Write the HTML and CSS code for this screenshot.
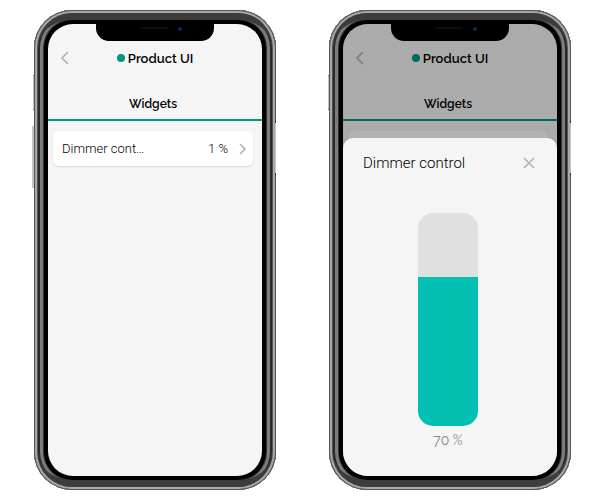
FILE: index.html
```html
<!DOCTYPE html>
<html lang="en">
<head>
    <meta charset="UTF-8">
    <meta name="viewport" content="width=device-width, initial-scale=1">
    <title>Product UI</title>
    <link rel="stylesheet" href="styles.css">
</head>
<body>
    <main class="phones">
        <section class="phone">
            <span class="side-key mute"></span>
            <span class="side-key volume"></span>
            <span class="side-key power"></span>
            <div class="screen">
                <div class="notch"><span class="speaker"></span><span class="camera"></span></div>
                <header class="app-header">
                    <button class="icon-button" aria-label="Back">
                        <svg width="8" height="14" viewBox="0 0 8 14"><path d="M7 1L1 7l6 6"/></svg>
                    </button>
                    <h1><span class="status"></span>Product UI</h1>
                </header>
                <nav class="tabs"><a href="#">Widgets</a></nav>
                <div class="widgets">
                    <a class="widget" href="#">
                        <span class="widget-name">Dimmer cont…</span>
                        <span class="widget-value">1 %</span>
                        <svg width="8" height="12" viewBox="0 0 8 12"><path d="M1 1l5 5-5 5"/></svg>
                    </a>
                </div>
            </div>
        </section>

        <section class="phone">
            <span class="side-key mute"></span>
            <span class="side-key power"></span>
            <div class="screen">
                <div class="notch"><span class="speaker"></span><span class="camera"></span></div>
                <header class="app-header">
                    <button class="icon-button" aria-label="Back">
                        <svg width="8" height="14" viewBox="0 0 8 14"><path d="M7 1L1 7l6 6"/></svg>
                    </button>
                    <h1><span class="status"></span>Product UI</h1>
                </header>
                <nav class="tabs"><a href="#">Widgets</a></nav>
                <div class="widgets">
                    <div class="widget"></div>
                </div>
                <div class="overlay">
                    <div class="sheet" role="dialog" aria-labelledby="dimmer-title">
                        <div class="sheet-header">
                            <h2 id="dimmer-title">Dimmer control</h2>
                            <button class="icon-button" aria-label="Close">
                                <svg width="12" height="12" viewBox="0 0 12 12"><path d="M1 1l10 10M11 1L1 11"/></svg>
                            </button>
                        </div>
                        <div class="dimmer">
                            <input id="dimmer" class="dimmer-slider" type="range" min="0" max="100" value="70" style="--level: 70%">
                            <label for="dimmer">70 %</label>
                        </div>
                    </div>
                </div>
            </div>
        </section>
    </main>
</body>
</html>
```
FILE: styles.css
```css
* {
    box-sizing: border-box;
}

body {
    margin: 0;
    background: #fff;
    font-family: Raleway, Lato, sans-serif;
    font-size: 12px;
    color: #000;
}

h1, h2 {
    margin: 0;
}

a {
    color: inherit;
    text-decoration: none;
}

svg {
    display: block;
    fill: none;
    stroke: #b4b4b4;
    stroke-width: 1.7;
}

.phones {
    display: grid;
    grid-template-columns: 1fr 1fr;
    gap: 53px;
    height: 100vh;
    padding: 10px 29px 10px 34px;
}

/* Metal frame, drawn as rings around the black bezel */
.phone {
    position: relative;
    padding: 14px;
    border-radius: 38px;
    background: #000;
    box-shadow:
        inset 0 0 0 1px #555,
        inset 0 0 0 3px #a8a8a8,
        inset 0 0 0 4px #555,
        inset 0 0 0 6px #2a2a2a,
        inset 0 0 0 9px #7c7c7c,
        inset 0 0 0 10px #333;
}

/* The frame is darker along the top and bottom edges */
.phone::before {
    content: "";
    position: absolute;
    inset: 3px 4px;
    border: solid #3c3c3c;
    border-width: 7px 0;
    border-radius: 34px;
}

.side-key {
    position: absolute;
    background: #c4c4c4;
}

.mute {
    top: 65px;
    left: -1px;
    width: 1px;
    height: 35px;
    border: solid #777;
    border-width: 1px 0;
}

.volume {
    top: 116px;
    left: -2px;
    width: 2px;
    height: 62px;
}

.power {
    top: 111px;
    right: 0;
    width: 1px;
    height: 54px;
    border: solid #222;
    border-width: 2px 0;
}

.screen {
    position: relative;
    height: 100%;
    overflow: hidden;
    border-radius: 25px;
    background: #f5f5f5;
}

.notch {
    position: absolute;
    z-index: 2;
    top: 0;
    left: 50%;
    display: flex;
    align-items: flex-start;
    justify-content: center;
    gap: 10px;
    width: 118px;
    height: 17px;
    padding-top: 3px;
    border-radius: 0 0 13px 13px;
    background: #000;
    transform: translateX(-50%);
}

.speaker {
    width: 28px;
    height: 2px;
    margin-left: 12px;
    border-radius: 1px;
    background: #0e0e0e;
}

.camera {
    width: 4px;
    height: 4px;
    border-radius: 50%;
    background: #0b2b50;
}

.app-header {
    display: grid;
    grid-template-columns: 24px 1fr 24px;
    align-items: center;
    height: 68px;
    padding: 0 5px;
}

.app-header h1 {
    display: flex;
    align-items: center;
    justify-content: center;
    gap: 3px;
    font-size: 13px;
    font-weight: 600;
}

.status {
    width: 8px;
    height: 8px;
    border-radius: 50%;
    background: #009688;
}

.icon-button {
    display: grid;
    place-items: center;
    width: 24px;
    height: 24px;
    padding: 0;
    border: 0;
    background: none;
}

.tabs {
    display: flex;
    height: 29px;
    border-bottom: 2px solid #009688;
}

.tabs a {
    flex: 1;
    padding-right: 4px;
    line-height: 24px;
    font-weight: 600;
    text-align: center;
}

.widgets {
    padding: 10px 9px 10px 5px;
}

.widget {
    display: flex;
    align-items: center;
    height: 35px;
    padding: 0 6px 0 9px;
    border-radius: 6px;
    background: #fff;
    box-shadow: 0 1px 2px rgba(0, 0, 0, 0.12);
    font-family: Roboto, sans-serif;
    font-size: 13px;
    font-weight: 300;
}

.widget-name {
    white-space: nowrap;
}

.widget-value {
    margin-left: auto;
    margin-right: 11px;
}

.overlay {
    position: absolute;
    z-index: 1;
    inset: 0;
    display: flex;
    padding-top: 114px;
    background: rgba(0, 0, 0, 0.3);
}

.sheet {
    flex: 1;
    border-radius: 10px 10px 0 0;
    background: #f5f5f5;
}

.sheet-header {
    display: flex;
    align-items: center;
    justify-content: space-between;
    height: 50px;
    padding: 0 16px 0 20px;
}

.sheet-header h2 {
    font-family: Roboto, sans-serif;
    font-size: 15px;
    font-weight: 300;
}

.dimmer {
    display: flex;
    flex-direction: column;
    align-items: center;
    gap: 6px;
    padding: 25px 4px 0 0;
}

.dimmer label {
    font-size: 14px;
    color: #888;
}

.dimmer-slider {
    width: 60px;
    height: 213px;
    margin: 0;
    border-radius: 15px;
    background: linear-gradient(to top, #04c0b2 var(--level), #e0e0e0 var(--level));
    appearance: none;
    writing-mode: vertical-lr;
    direction: rtl;
}

.dimmer-slider::-webkit-slider-thumb {
    width: 60px;
    height: 1px;
    appearance: none;
    background: transparent;
}
```
